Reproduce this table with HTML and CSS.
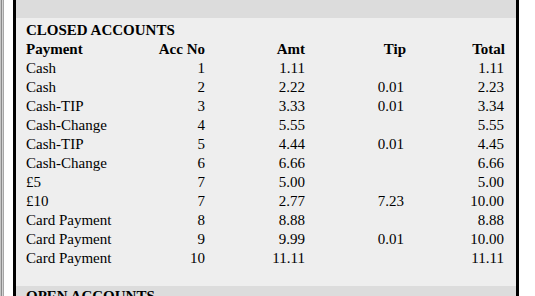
FILE: index.html
```html
<!DOCTYPE html>
<html>
<head>
<meta charset="utf-8">
<link rel="stylesheet" href="styles.css">
</head>
<body>
<div class="frame">
  <div class="edge"></div>
  <div class="panel">
    <div class="prev"></div>
    <section class="closed">
      <h2 class="title">CLOSED ACCOUNTS</h2>
      <div class="grid">
        <div class="h">Payment</div><div class="h r">Acc No</div><div class="h r">Amt</div><div class="h r">Tip</div><div class="h r">Total</div>
        <div>Cash</div><div class="r">1</div><div class="r">1.11</div><div class="r tip"></div><div class="r tot">1.11</div>
        <div>Cash</div><div class="r">2</div><div class="r">2.22</div><div class="r tip">0.01</div><div class="r tot">2.23</div>
        <div>Cash-TIP</div><div class="r">3</div><div class="r">3.33</div><div class="r tip">0.01</div><div class="r tot">3.34</div>
        <div>Cash-Change</div><div class="r">4</div><div class="r">5.55</div><div class="r tip"></div><div class="r tot">5.55</div>
        <div>Cash-TIP</div><div class="r">5</div><div class="r">4.44</div><div class="r tip">0.01</div><div class="r tot">4.45</div>
        <div>Cash-Change</div><div class="r">6</div><div class="r">6.66</div><div class="r tip"></div><div class="r tot">6.66</div>
        <div>£5</div><div class="r">7</div><div class="r">5.00</div><div class="r tip"></div><div class="r tot">5.00</div>
        <div>£10</div><div class="r">7</div><div class="r">2.77</div><div class="r tip">7.23</div><div class="r tot">10.00</div>
        <div>Card Payment</div><div class="r">8</div><div class="r">8.88</div><div class="r tip"></div><div class="r tot">8.88</div>
        <div>Card Payment</div><div class="r">9</div><div class="r">9.99</div><div class="r tip">0.01</div><div class="r tot">10.00</div>
        <div>Card Payment</div><div class="r">10</div><div class="r">11.11</div><div class="r tip"></div><div class="r tot">11.11</div>
      </div>
    </section>
    <section class="open">
      <h2 class="title">OPEN ACCOUNTS</h2>
    </section>
  </div>
</div>
</body>
</html>
```
FILE: styles.css
```css
html, body {
  margin: 0;
  padding: 0;
  background: #ffffff;
  height: 296px;
  overflow: hidden;
}
body {
  font-family: "Liberation Serif", "Times New Roman", serif;
  font-size: 15px;
  line-height: 19px;
  color: #000;
}
.frame {
  display: flex;
  align-items: stretch;
  height: 296px;
}
.edge {
  width: 4px;
  flex: none;
  background: linear-gradient(to right, #c6c6c6 0 1px, #8a8a8a 1px 2px, #d2d2d2 2px 3px, #a6a6a6 3px 4px);
}
.panel {
  margin-left: 9px;
  width: 500px;
  flex: none;
  border-left: 3px solid #000;
  border-right: 3px solid #000;
  background: #dcdcdc;
  display: flex;
  flex-direction: column;
}
.prev {
  height: 18px;
  background: #dcdcdc;
  flex: none;
}
.closed {
  background: #eeeeee;
  padding: 3px 0 18px 10px;
  flex: none;
}
.open {
  background: #dcdcdc;
  padding: 1px 0 0 10px;
  flex: 1;
}
.title {
  margin: 0;
  font-size: 15px;
  font-weight: bold;
  line-height: 19px;
}
.grid {
  display: grid;
  grid-template-columns: 100px 79px 100px 101px 99px;
}
.h {
  font-weight: bold;
}
.r {
  text-align: right;
}
.tip:not(.h) {
  padding-right: 2px;
}
.tot:not(.h) {
  padding-right: 1px;
}
```
